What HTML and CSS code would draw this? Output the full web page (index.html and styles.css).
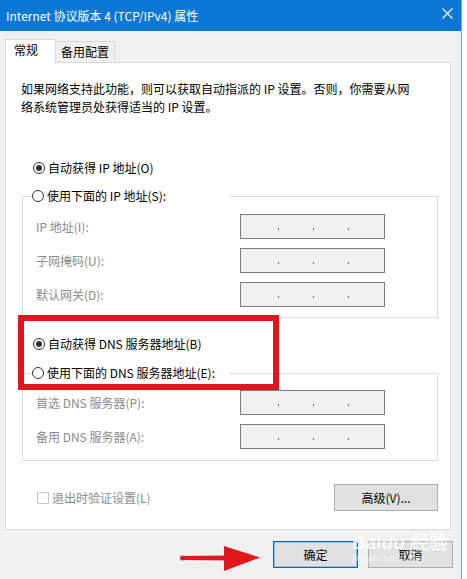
FILE: index.html
```html
<!DOCTYPE html>
<html lang="zh-CN">
<head>
    <meta charset="UTF-8">
    <meta name="viewport" content="width=device-width, initial-scale=1.0">
    <title>Internet 协议版本 4 (TCP/IPv4) 属性</title>
    <link rel="stylesheet" href="styles.css">
</head>
<body>

<div class="window">
    <div class="titlebar">
        <span class="title">Internet 协议版本 4 (TCP/IPv4) 属性</span>
        <svg class="close" width="11" height="11" viewBox="0 0 11 11">
            <path d="M0.5 0.5 L10.5 10.5 M10.5 0.5 L0.5 10.5" stroke="#fff" stroke-width="1.1" fill="none"/>
        </svg>
    </div>

    <div class="tabs">
        <div class="tab active">常规</div>
        <div class="tab">备用配置</div>
    </div>

    <div class="panel">
        <p class="intro">如果网络支持此功能，则可以获取自动指派的 IP 设置。否则，你需要从网<br>络系统管理员处获得适当的 IP 设置。</p>

        <!-- IP address -->
        <div class="radio-row first"><span class="radio checked"></span>自动获得 IP 地址(O)</div>
        <fieldset class="group ip-group">
            <legend><span class="radio"></span>使用下面的 IP 地址(S):</legend>
            <div class="field"><span>IP 地址(I):</span><div class="ip"><i></i><i></i><i></i></div></div>
            <div class="field"><span>子网掩码(U):</span><div class="ip"><i></i><i></i><i></i></div></div>
            <div class="field"><span>默认网关(D):</span><div class="ip"><i></i><i></i><i></i></div></div>
        </fieldset>

        <!-- DNS -->
        <div class="radio-row dns"><span class="radio checked"></span>自动获得 DNS 服务器地址(B)</div>
        <fieldset class="group dns-group">
            <legend><span class="radio"></span>使用下面的 DNS 服务器地址(E):</legend>
            <div class="field"><span>首选 DNS 服务器(P):</span><div class="ip"><i></i><i></i><i></i></div></div>
            <div class="field"><span>备用 DNS 服务器(A):</span><div class="ip"><i></i><i></i><i></i></div></div>
        </fieldset>

        <div class="footer-row">
            <label class="check"><span class="box"></span>退出时验证设置(L)</label>
            <button class="btn advanced">高级(V)...</button>
        </div>

        <div class="highlight"></div>
    </div>

    <div class="actions">
        <svg class="arrow" width="84" height="30" viewBox="0 0 84 30">
            <path d="M3 13 L50 12.5 L50 17.5 L3 17 Z" fill="#e0181c"/>
            <circle cx="3.5" cy="15" r="2.5" fill="#e0181c"/>
            <path d="M45 3 L81 14.5 L45 28 Z" fill="#e0181c"/>
        </svg>
        <button class="btn ok">确定</button>
        <button class="btn">取消</button>
        <div class="watermark">Bai<span>du</span> 经验<small>jingyan.baidu.com</small></div>
    </div>
</div>

</body>
</html>
```

FILE: styles.css
```css
body {
    margin: 0;
    background-color: #fff;
    font-family: "Noto Sans CJK SC", sans-serif;
    font-size: 12px;
    color: #000;
}
.window {
    width: 461px;
    height: 579px;
    background-color: #f0f0f0;
    border-right: 1px solid #6aa6dc;
    overflow: hidden;
}
.titlebar {
    height: 31px;
    background-color: #0b77d4;
    color: #fff;
    display: flex;
    align-items: center;
    justify-content: space-between;
    padding: 0 8px 0 6px;
    line-height: 18px;
}
.close {
    margin-top: -4px;
}
.tabs {
    display: flex;
    align-items: flex-end;
    height: 23px;
    margin-top: 8px;
    padding-left: 5px;
}
.tab {
    height: 21px;
    line-height: 20px;
    padding: 0 5px;
    border: 1px solid #d9d9d9;
    border-bottom: none;
    box-sizing: border-box;
}
.tab.active {
    height: 24px;
    width: 50px;
    padding-left: 8px;
    background-color: #fff;
    margin-bottom: -1px;
    position: relative;
    z-index: 1;
    border-right: none;
}
.panel {
    position: relative;
    height: 468px;
    box-sizing: border-box;
    margin: 0 10px 0 5px;
    padding: 0 12px 0 16px;
    background-color: #fff;
    border: 1px solid #d9d9d9;
}
.intro {
    margin: 17px 0 0 -1px;
    line-height: 18px;
}
.radio-row,
legend {
    display: flex;
    align-items: center;
    height: 18px;
    line-height: 18px;
}
.radio-row {
    padding-left: 11px;
}
.radio-row.first {
    margin-top: 43px;
}
.radio-row.dns {
    margin-top: 17px;
}
.radio {
    width: 12px;
    height: 12px;
    border: 1px solid #333;
    border-radius: 50%;
    box-sizing: border-box;
    margin-right: 3px;
    position: relative;
    background-color: #fff;
}
.radio.checked::after {
    content: "";
    position: absolute;
    left: 2px;
    top: 2px;
    width: 6px;
    height: 6px;
    border-radius: 50%;
    background-color: #333;
}
.group {
    margin: 10px 0 0 0;
    padding: 9px 0 10px 13px;
    border: 1px solid #dcdcdc;
}
.dns-group {
    margin-top: 11px;
    padding-top: 8px;
    padding-bottom: 11px;
}
legend {
    width: 198px;
    margin-left: -4px;
    padding: 0;
    box-sizing: border-box;
}
.field {
    display: grid;
    grid-template-columns: 204px 145px;
    align-items: center;
    color: #8a8a8a;
}
.field + .field {
    margin-top: 9px;
}
.ip {
    height: 25px;
    box-sizing: border-box;
    border: 1px solid #7d7d7d;
    background-color: #f0f0f0;
    display: flex;
    align-items: center;
    padding-left: 37px;
    gap: 34px;
}
.ip i {
    width: 1px;
    height: 2px;
    background-color: #6d6d6d;
    margin-top: 4px;
}
.footer-row {
    display: flex;
    align-items: center;
    justify-content: space-between;
    margin-top: 23px;
    padding-left: 15px;
}
.check {
    display: flex;
    align-items: center;
    color: #8a8a8a;
    line-height: 18px;
}
.box {
    width: 12px;
    height: 12px;
    border: 1px solid #c4c4c4;
    box-sizing: border-box;
    margin-right: 3px;
}
.btn {
    font-family: "Noto Sans CJK SC", sans-serif;
    font-size: 12px;
    color: #000;
    background-color: #e1e1e1;
    border: 1px solid #adadad;
    height: 27px;
    width: 85px;
    padding: 0;
    line-height: 18px;
    flex-shrink: 0;
}
.btn.advanced {
    width: 104px;
}
.highlight {
    position: absolute;
    left: 12px;
    top: 252px;
    width: 261px;
    height: 75px;
    box-sizing: border-box;
    border: 6px solid #e0161c;
}
.actions {
    position: relative;
    display: flex;
    justify-content: flex-end;
    align-items: center;
    gap: 10px;
    margin-top: 11px;
    padding-right: 8px;
}
.ok {
    border-color: #1466a8;
    box-shadow: inset 0 0 0 1px #8fc0e6;
}
.arrow {
    position: absolute;
    left: 179px;
    top: 2px;
}
.watermark {
    position: absolute;
    left: 352px;
    top: -8px;
    color: rgba(255, 255, 255, 0.75);
    font-family: "Liberation Sans", sans-serif;
    font-size: 19px;
    font-weight: bold;
    line-height: 20px;
    pointer-events: none;
}
.watermark span {
    font-style: italic;
}
.watermark small {
    display: block;
    font-size: 9px;
    font-weight: normal;
    line-height: 10px;
    color: rgba(255, 255, 255, 0.6);
}
```
